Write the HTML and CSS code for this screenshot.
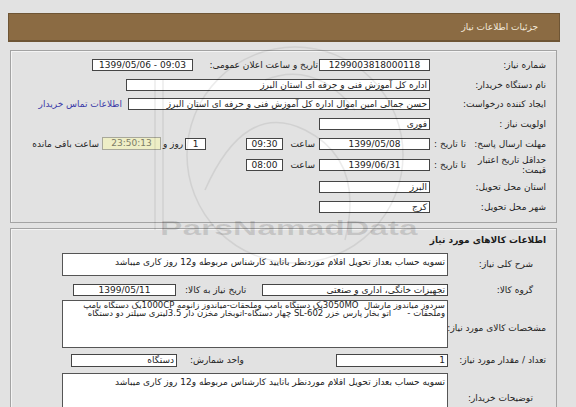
FILE: index.html
```html
<!DOCTYPE html>
<html lang="fa">
<head>
<meta charset="utf-8">
<title>جزئیات اطلاعات نیاز</title>
<link rel="stylesheet" href="styles.css">
</head>
<body>
<div class="page">
  <div class="header">جزئیات اطلاعات نیاز</div>

  <div class="panel p1">
    <div class="row">
      <div class="lbl">شماره نیاز:</div>
      <div class="box w111 c">1299003818000118</div>
      <div class="lbl2">تاریخ و ساعت اعلان عمومی:</div>
      <div class="box w101 c ltr">1399/05/06 - 09:03</div>
    </div>
    <div class="row">
      <div class="lbl">نام دستگاه خریدار:</div>
      <div class="box w304">اداره کل آموزش فنی و حرفه ای استان البرز</div>
    </div>
    <div class="row">
      <div class="lbl">ایجاد کننده درخواست:</div>
      <div class="box w302">حسن جمالی امین اموال اداره کل آموزش فنی و حرفه ای استان البرز</div>
      <a class="link" href="#">اطلاعات تماس خریدار</a>
    </div>
    <div class="row">
      <div class="lbl">اولویت نیاز :</div>
      <div class="box w111">فوری</div>
    </div>
    <div class="row">
      <div class="lbl split"><span>مهلت ارسال پاسخ:</span><span class="to">تا تاریخ :</span></div>
      <div class="box w111 c">1399/05/08</div>
      <div class="saat">ساعت</div>
      <div class="box w37 c">09:30</div>
      <div class="box w21 c days">1</div>
      <div class="roz">روز و</div>
      <div class="remain c">23:50:13</div>
      <div class="left">ساعت باقی مانده</div>
    </div>
    <div class="row tall">
      <div class="lbl split"><span class="wrap">حداقل تاریخ اعتبار قیمت:</span><span class="to">تا تاریخ :</span></div>
      <div class="box w111 c">1399/06/31</div>
      <div class="saat">ساعت</div>
      <div class="box w37 c">08:00</div>
    </div>
    <div class="row">
      <div class="lbl">استان محل تحویل:</div>
      <div class="box w111">البرز</div>
    </div>
    <div class="row">
      <div class="lbl">شهر محل تحویل:</div>
      <div class="box w111">کرج</div>
    </div>
  </div>

  <div class="panel p2">
    <div class="title">اطلاعات کالاهای مورد نیاز</div>
    <div class="frow f1">
      <div class="flbl">شرح کلی نیاز:</div>
      <div class="ta ta1">تسویه حساب بعداز تحویل اقلام موردنظر باتایید کارشناس مربوطه و12 روز کاری میباشد</div>
    </div>
    <div class="frow f2">
      <div class="flbl">گروه کالا:</div>
      <div class="box w186">تجهیزات خانگی، اداری و صنعتی</div>
      <div class="mlbl w86">تاریخ نیاز به کالا:</div>
      <div class="box w103 c">1399/05/11</div>
    </div>
    <div class="frow f3">
      <div class="flbl wide low">مشخصات کالای مورد نیاز:</div>
      <div class="ta ta2"><div class="line">سردوز میاندوز مارشال  3050MOیک دستگاه بامپ وملحقات-میاندوز زانومه 1000CPیک دستگاه بامپ</div><div class="line">وملحقات -      اتو بخار پارس خزر SL-602 چهار دستگاه-اتوبخار مخزن دار 3.5لیتری سیلتر دو دستگاه</div></div>
    </div>
    <div class="frow f4">
      <div class="flbl wide">تعداد / مقدار مورد نیاز:</div>
      <div class="box w112 h13">1</div>
      <div class="mlbl w159">واحد شمارش:</div>
      <div class="box w106 h13">دستگاه</div>
    </div>
    <div class="frow f5">
      <div class="flbl top">توضیحات خریدار:</div>
      <div class="ta ta3">تسویه حساب بعداز تحویل اقلام موردنظر باتایید کارشناس مربوطه و12 روز کاری میباشد</div>
    </div>
  </div>

  <div class="watermark" aria-hidden="true">
    <svg class="wm-logo" width="300" height="230" viewBox="0 0 300 230">
      <path d="M10 40 L10 190 M18 40 L18 190" fill="none" stroke="#000" stroke-width="1.5"/>
      <circle cx="150" cy="115" r="108" fill="none" stroke="#000" stroke-width="1.5"/>
      <path d="M60 150 Q100 60 160 90 Q220 120 200 200" fill="none" stroke="#000" stroke-width="1.5"/>
      <path d="M120 40 Q170 20 210 70" fill="none" stroke="#000" stroke-width="1.5"/>
    </svg>
    <div class="wm-text">ParsNamadData</div>
  </div>
</div>
</body>
</html>
```
FILE: styles.css
```css
html, body {
  margin: 0;
  background: #e2e2e2;
}

body {
  font-family: "DejaVu Sans", sans-serif;
  font-size: 9px;
  color: #222;
}

.page {
  direction: rtl;
  position: relative;
  height: 407px;
  box-sizing: border-box;
  padding: 13px 16px 0 8px;
  overflow: hidden;
}

.header {
  height: 29px;
  box-sizing: border-box;
  background: #8b6b43;
  border: 1px solid #6e5535;
  border-bottom-width: 2px;
  display: flex;
  align-items: center;
  padding-right: 21px;
  color: #f3eadb;
  font-size: 9px;
}

.panel {
  margin: 8px 3px 0 2px;
  border: 1px solid #a3a3a3;
  box-shadow: inset 1px 1px 0 #f4f4f4;
}

.p1 {
  padding: 4px 0 5px;
}

.p2 {
  margin-top: 5px;
  height: 400px;
}

.row {
  display: flex;
  align-items: center;
  height: 19.7px;
}

.row.tall {
  height: 24px;
}

.lbl {
  width: 116px;
  padding-right: 10px;
  flex: none;
  white-space: nowrap;
}

.lbl.split {
  display: flex;
  align-items: center;
}

.lbl .to {
  margin-right: auto;
  padding-left: 4px;
}

.lbl .wrap {
  white-space: normal;
  width: 68px;
  line-height: 10px;
}

.lbl2 {
  width: 125px;
  padding-right: 1px;
  flex: none;
  white-space: nowrap;
}

.box {
  height: 12px;
  box-sizing: border-box;
  border: 1px solid #454545;
  background: #fff;
  line-height: 10px;
  padding: 0 2px;
  white-space: nowrap;
  overflow: hidden;
  flex: none;
}

.box.h13 {
  height: 13px;
  line-height: 11px;
}

.c {
  text-align: center;
}

.ltr {
  direction: ltr;
}

.w21 { width: 21px; }
.w37 { width: 37px; }
.w101 { width: 101px; }
.w103 { width: 103px; }
.w106 { width: 106px; }
.w111 { width: 111px; }
.w112 { width: 112px; }
.w186 { width: 186px; }
.w302 { width: 302px; }
.w304 { width: 304px; }

.link {
  margin-right: 6px;
  color: #3a3aa8;
  text-decoration: none;
  white-space: nowrap;
}

.saat {
  width: 34px;
  padding-right: 4px;
  box-sizing: border-box;
  flex: none;
}

.saat + .box {
  margin-right: 2px;
}

.days {
  margin-right: 40px !important;
}

.roz {
  width: 24px;
  text-align: center;
  flex: none;
  white-space: nowrap;
}

.remain {
  width: 59px;
  height: 13px;
  box-sizing: border-box;
  background: #eeeec6;
  border: 1px solid #a8a89a;
  color: #7c7c66;
  line-height: 11px;
  flex: none;
}

.left {
  margin-right: 3px;
  white-space: nowrap;
}

.title {
  height: 22px;
  display: flex;
  align-items: center;
  padding-right: 10px;
  font-weight: bold;
  color: #1c1c1c;
}

.frow {
  display: flex;
  align-items: center;
}

.flbl {
  width: 85px;
  padding-right: 23px;
  flex: none;
  white-space: nowrap;
}

.flbl.wide {
  padding-right: 10px;
  width: 98px;
}

.flbl.low {
  padding-top: 9px;
}

.flbl.top {
  align-self: flex-start;
  padding-top: 20px;
}

.mlbl {
  flex: none;
  box-sizing: border-box;
  text-align: left;
  white-space: nowrap;
}

.w86 { width: 86px; padding-left: 9px; }
.w159 { width: 159px; padding-left: 13px; }

.ta {
  width: 386px;
  box-sizing: border-box;
  border: 1px solid #555;
  background: #fff;
  padding: 3px 2px 0;
  line-height: 10px;
  flex: none;
  overflow: hidden;
}

.f1 { margin-top: 2px; }
.ta1 { height: 23px; }

.f2 { margin-top: 8px; }

.f3 { margin-top: 4px; }
.ta2 {
  height: 48px;
  padding: 0 2px 0 10px;
  line-height: 8.5px;
  font-size: 8.5px;
}

.ta2 .line {
  white-space: pre;
}

.f4 { margin-top: 6px; }

.f5 { margin-top: 6px; }
.ta3 { height: 60px; }

.watermark {
  position: absolute;
  left: 0;
  top: 0;
  width: 576px;
  height: 407px;
  pointer-events: none;
  direction: ltr;
}

.wm-logo {
  position: absolute;
  left: 145px;
  top: 40px;
  opacity: 0.07;
}

.wm-text {
  position: absolute;
  left: 160px;
  top: 216px;
  font-family: "Liberation Sans", sans-serif;
  font-weight: bold;
  font-size: 21px;
  color: rgba(0, 0, 0, 0.12);
  transform: scaleX(1.6);
  transform-origin: left top;
  white-space: nowrap;
}
```
